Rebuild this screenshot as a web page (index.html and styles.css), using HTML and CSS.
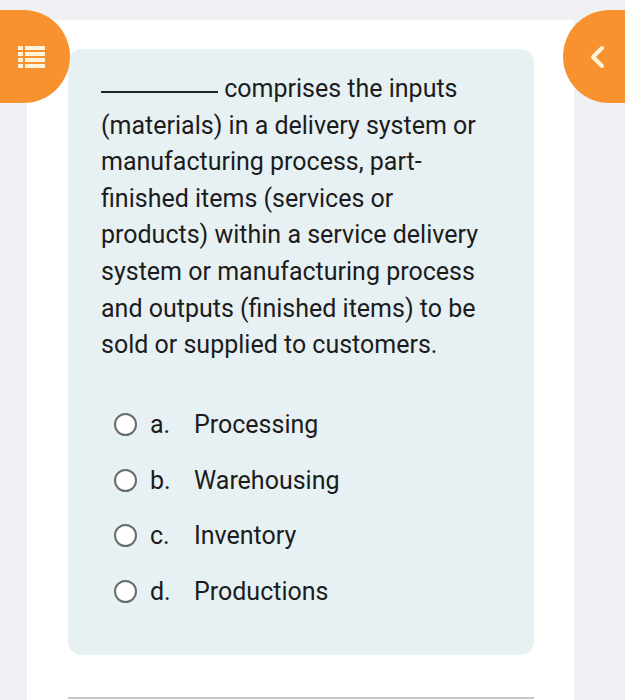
FILE: index.html
```html
<!DOCTYPE html>
<html>
<head>
<meta charset="utf-8">
<link rel="stylesheet" href="styles.css">
</head>
<body>
<div class="page">
  <div class="sheet">
    <div class="card">
      <p class="question"><span class="blank"></span> comprises the inputs (materials) in a delivery system or manufacturing process, part-finished items (services or products) within a service delivery system or manufacturing process and outputs (finished items) to be sold or supplied to customers.</p>
      <ul class="options">
        <li class="option"><span class="radio"></span><span class="letter">a.</span><span class="label">Processing</span></li>
        <li class="option"><span class="radio"></span><span class="letter">b.</span><span class="label">Warehousing</span></li>
        <li class="option"><span class="radio"></span><span class="letter">c.</span><span class="label">Inventory</span></li>
        <li class="option"><span class="radio"></span><span class="letter">d.</span><span class="label">Productions</span></li>
      </ul>
    </div>
    <div class="divider"></div>
  </div>
  <button class="fab fab-left" aria-label="menu">
    <svg width="27" height="22" viewBox="0 0 27 22">
      <g fill="#fff3dc">
        <rect x="0" y="0" width="5" height="4"/><rect x="7" y="0" width="20" height="4"/>
        <rect x="0" y="6" width="5" height="4"/><rect x="7" y="6" width="20" height="4"/>
        <rect x="0" y="12" width="5" height="4"/><rect x="7" y="12" width="20" height="4"/>
        <rect x="0" y="18" width="5" height="4"/><rect x="7" y="18" width="20" height="4"/>
      </g>
    </svg>
  </button>
  <button class="fab fab-right" aria-label="back">
    <svg width="20" height="26" viewBox="0 0 20 26">
      <path d="M15 4 L6 13 L15 22" fill="none" stroke="#fff3dc" stroke-width="4" stroke-linecap="round" stroke-linejoin="round"/>
    </svg>
  </button>
</div>
</body>
</html>
```

FILE: styles.css
```css
html, body {
  margin: 0;
  padding: 0;
  background: #eff1f5;
  font-family: Roboto, "Noto Sans", Arial, sans-serif;
}
.page {
  position: relative;
  width: 625px;
  height: 700px;
  overflow: hidden;
}
.sheet {
  margin: 20px 0 0 27px;
  width: 547px;
  height: 680px;
  background: #ffffff;
  padding-top: 29px;
  box-sizing: border-box;
}
.card {
  margin-left: 41px;
  width: 466px;
  height: 606px;
  box-sizing: border-box;
  background: #e7f1f4;
  border-radius: 14px;
  padding: 22px 28px 0 33px;
}
.question {
  margin: 0;
  font-size: 25px;
  line-height: 36.6px;
  color: #1c1c1c;
}
.blank {
  display: inline-block;
  width: 117px;
  border-bottom: 2px solid #222;
  vertical-align: 4px;
}
.options {
  list-style: none;
  margin: 33px 0 0 0;
  padding: 0 0 0 13px;
}
.option {
  display: flex;
  align-items: center;
  height: 55.5px;
  font-size: 25px;
  color: #1c1c1c;
}
.radio {
  width: 19px;
  height: 19px;
  border: 2.2px solid #6b6b6b;
  border-radius: 50%;
  background: #fff;
  margin-right: 13px;
  flex: none;
}
.letter {
  width: 44px;
}
.divider {
  margin: 42px 0 0 41px;
  width: 466px;
  height: 2px;
  background: #c8c8c8;
}
.fab {
  position: absolute;
  top: 10px;
  width: 118px;
  height: 93px;
  border: none;
  border-radius: 47px;
  background: #f7922f;
  display: flex;
  align-items: center;
  justify-content: center;
  padding: 0;
}
.fab-left {
  left: -48px;
  padding-left: 40px;
}
.fab-right {
  left: 563px;
  justify-content: flex-start;
  padding-left: 24px;
}
```
